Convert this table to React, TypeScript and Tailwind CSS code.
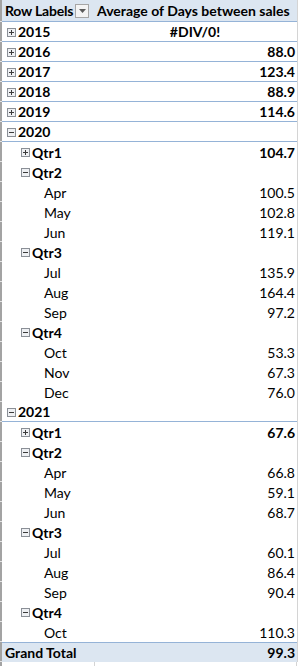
import React from "react";

type Row = {
  label: string;
  kind: "year" | "qtr" | "month";
  icon?: "plus" | "minus";
  value?: string;
  bold?: boolean;
  center?: boolean;
};

const rows: Row[] = [
  { label: "2015", kind: "year", icon: "plus", value: "#DIV/0!", bold: true, center: true },
  { label: "2016", kind: "year", icon: "plus", value: "88.0", bold: true },
  { label: "2017", kind: "year", icon: "plus", value: "123.4", bold: true },
  { label: "2018", kind: "year", icon: "plus", value: "88.9", bold: true },
  { label: "2019", kind: "year", icon: "plus", value: "114.6", bold: true },
  { label: "2020", kind: "year", icon: "minus" },
  { label: "Qtr1", kind: "qtr", icon: "plus", value: "104.7", bold: true },
  { label: "Qtr2", kind: "qtr", icon: "minus" },
  { label: "Apr", kind: "month", value: "100.5" },
  { label: "May", kind: "month", value: "102.8" },
  { label: "Jun", kind: "month", value: "119.1" },
  { label: "Qtr3", kind: "qtr", icon: "minus" },
  { label: "Jul", kind: "month", value: "135.9" },
  { label: "Aug", kind: "month", value: "164.4" },
  { label: "Sep", kind: "month", value: "97.2" },
  { label: "Qtr4", kind: "qtr", icon: "minus" },
  { label: "Oct", kind: "month", value: "53.3" },
  { label: "Nov", kind: "month", value: "67.3" },
  { label: "Dec", kind: "month", value: "76.0" },
  { label: "2021", kind: "year", icon: "minus" },
  { label: "Qtr1", kind: "qtr", icon: "plus", value: "67.6", bold: true },
  { label: "Qtr2", kind: "qtr", icon: "minus" },
  { label: "Apr", kind: "month", value: "66.8" },
  { label: "May", kind: "month", value: "59.1" },
  { label: "Jun", kind: "month", value: "68.7" },
  { label: "Qtr3", kind: "qtr", icon: "minus" },
  { label: "Jul", kind: "month", value: "60.1" },
  { label: "Aug", kind: "month", value: "86.4" },
  { label: "Sep", kind: "month", value: "90.4" },
  { label: "Qtr4", kind: "qtr", icon: "minus" },
  { label: "Oct", kind: "month", value: "110.3" },
];

function ToggleIcon({ type }: { type: "plus" | "minus" }) {
  return (
    <svg width="9" height="9" viewBox="0 0 9 9" className="shrink-0">
      <rect x="0.5" y="0.5" width="8" height="8" fill="#eef0f3" stroke="#8a8f96" />
      <line x1="2" y1="4.5" x2="7" y2="4.5" stroke="#3b3b3b" />
      {type === "plus" && <line x1="4.5" y1="2" x2="4.5" y2="7" stroke="#3b3b3b" />}
    </svg>
  );
}

function LeftEdge() {
  return <div className="w-[2px] h-full bg-[#a3a3a3] border-b border-[#e4e4e4] shrink-0" />;
}

function GridRight() {
  return (
    <>
      <div className="w-[1px] h-full bg-[#d4d4d4] shrink-0" />
      <div className="w-[1px] h-full bg-white shrink-0" />
    </>
  );
}

function PivotRow({ row }: { row: Row }) {
  const border = row.kind === "year" ? "border-b border-[#95b3d7]" : "";
  return (
    <div className="flex h-[20px]">
      <LeftEdge />
      <div className={`flex flex-1 h-full ${border}`}>
        <div
          className={`w-[93px] flex items-center h-full pt-[1px] ${
            row.kind === "year" ? "pl-[5px] gap-[2px]" : row.kind === "qtr" ? "pl-[19px] gap-[2px]" : "pl-[42px]"
          }`}
        >
          {row.icon && <ToggleIcon type={row.icon} />}
          <span className={row.kind === "month" ? "font-normal" : "font-bold"}>{row.label}</span>
        </div>
        <div
          className={`w-[202px] h-full flex items-center pt-[1px] pr-[2px] ${
            row.center ? "justify-center" : "justify-end"
          } ${row.bold ? "font-bold" : "font-normal"}`}
        >
          {row.value}
        </div>
      </div>
      <GridRight />
    </div>
  );
}

export default function App() {
  return (
    <div
      className="w-[299px] h-[666px] bg-white text-black overflow-hidden text-[14px] leading-[20px] whitespace-nowrap"
      style={{ fontFamily: "Lato, 'Liberation Sans', sans-serif" }}
    >
      {/* header */}
      <div className="flex h-[22px]">
        <LeftEdge />
        <div className="flex flex-1 h-full bg-[#dce6f1] border-b border-[#95b3d7] font-bold">
          <div className="w-[93px] flex items-center pl-[3px] gap-[2px]">
            <span className="tracking-[-0.2px]">Row Labels</span>
            <div className="w-[14px] h-[14px] border border-[#a6a6a6] bg-[#f4f4f4] flex items-center justify-center shrink-0">
              <svg width="7" height="4" viewBox="0 0 7 4">
                <path d="M0 0h7L3.5 4z" fill="#5a5a5a" />
              </svg>
            </div>
          </div>
          <div className="w-[202px] flex items-center pl-[2px]">Average of Days between sales</div>
        </div>
        <GridRight />
      </div>

      {rows.map((r, i) => (
        <PivotRow key={i} row={r} />
      ))}

      {/* grand total */}
      <div className="flex h-[20px]">
        <LeftEdge />
        <div className="flex flex-1 h-full bg-[#dce6f1] border-t border-[#95b3d7] font-bold">
          <div className="w-[93px] flex items-center pl-[3px] pt-[1px]">Grand Total</div>
          <div className="w-[202px] flex items-center justify-end pr-[2px] pt-[1px]">99.3</div>
        </div>
        <GridRight />
      </div>

      <div className="flex h-[4px]">
        <div className="w-[2px] h-full bg-[#a3a3a3]" />
        <div className="w-[93px] h-full border-r border-[#d4d4d4]" />
        <div className="w-[201px] h-full" />
        <GridRight />
      </div>
    </div>
  );
}
